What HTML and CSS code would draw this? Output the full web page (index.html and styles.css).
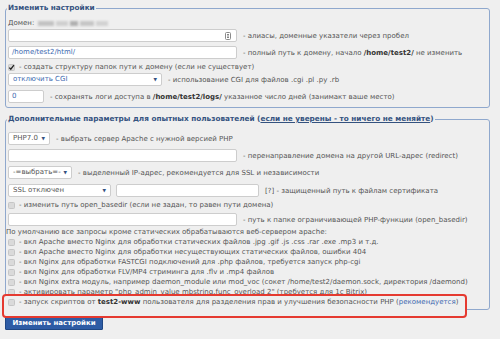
FILE: index.html
```html
<!DOCTYPE html>
<html lang="ru">
<head>
<meta charset="utf-8">
<title>Изменить настройки</title>
<link rel="stylesheet" href="styles.css">
</head>
<body>
<div class="page">
  <fieldset class="box box-main">
    <legend class="legend">Изменить настройки</legend>
    <div class="domain">Домен: <span class="blur"><i></i><i></i><i></i><i></i><i></i></span></div>

    <div class="row mt1">
      <div class="input w-wide"><svg class="autofill" width="6" height="8" viewBox="0 0 6 8"><rect x="0.5" y="0.5" width="5" height="7" rx="1" fill="#fff" stroke="#8a8a8a"/><path d="M2 2.5h2M2 4h2M2 5.5h2" stroke="#666" stroke-width="0.8"/></svg></div>
      <span class="label">- алиасы, доменные указатели через пробел</span>
    </div>

    <div class="row mt4">
      <div class="input w-wide blue">/home/test2/html/</div>
      <span class="label">- полный путь к домену, начало <b>/home/test2/</b> не изменить</span>
    </div>

    <div class="crow crow-first">
      <span class="cb cb-checked"><svg width="7" height="7" viewBox="0 0 7 7"><path d="M1.3 3.6 L2.8 5.2 L5.9 1.2" fill="none" stroke="#222" stroke-width="1.3"/></svg></span>
      <span class="label">- создать структуру папок пути к домену (если не существует)</span>
    </div>

    <div class="row mt1">
      <div class="select w-cgi blue">отключить CGI<span class="arrow">▼</span></div>
      <span class="label">- использование CGI для файлов .cgi .pl .py .rb</span>
    </div>

    <div class="row mt4">
      <div class="input w-days blue">0</div>
      <span class="label">- сохранять логи доступа в <b>/home/test2/logs/</b> указанное число дней (занимакт ваше место)</span>
    </div>
  </fieldset>

  <fieldset class="box box-extra">
    <legend class="legend">Дополнительные параметры для опытных пользователей (<u>если не уверены - то ничего не меняйте</u>)</legend>

    <div class="row mt8">
      <div class="select w-php">PHP7.0<span class="arrow">▼</span></div>
      <span class="label">- выбрать сервер Apache с нужной версией PHP</span>
    </div>

    <div class="row mt4">
      <div class="input w-wide"></div>
      <span class="label">- перенаправление домена на другой URL-адрес (redirect)</span>
    </div>

    <div class="row mt4">
      <div class="select w-ip">-=выбрать=-<span class="arrow">▼</span></div>
      <span class="label">- выделенный IP-адрес, рекомендуется для SSL и независимости</span>
    </div>

    <div class="row mt5">
      <div class="select w-ssl">SSL отключен<span class="arrow">▼</span></div>
      <div class="input w-cert"></div>
      <span class="label">[?] - защищенный путь к файлам сертификата</span>
    </div>

    <div class="crow mt3">
      <span class="cb"></span>
      <span class="label">- изменить путь open_basedir (если не задан, то равен пути домена)</span>
    </div>

    <div class="row mt3">
      <div class="input w-wide"></div>
      <span class="label">- путь к папке ограничивающей PHP-функции (open_basedir)</span>
    </div>

    <div class="note">По умолчанию все запросы кроме статических обрабатываются веб-сервером apache:</div>

    <div class="crow"><span class="cb"></span><span class="label">- вкл Apache вместо Nginx для обработки статических файлов .jpg .gif .js .css .rar .exe .mp3 и т.д.</span></div>
    <div class="crow"><span class="cb"></span><span class="label">- вкл Apache вместо Nginx для обработки несуществующих статических файлов, ошибки 404</span></div>
    <div class="crow"><span class="cb"></span><span class="label">- вкл Nginx для обработки FASTCGI подключений для .php файлов, требуется запуск php-cgi</span></div>
    <div class="crow"><span class="cb"></span><span class="label">- вкл Nginx для обработки FLV/MP4 стриминга для .flv и .mp4 файлов</span></div>
    <div class="crow"><span class="cb"></span><span class="label">- вкл Nginx extra модуль, например daemon_module или mod_voc (сокет /home/test2/daemon.sock, директория /daemond)</span></div>
    <div class="crow"><span class="cb"></span><span class="label">- активировать параметр "php_admin_value mbstring.func_overload 2" (требуется для 1с Bitrix)</span></div>
    <div class="crow highlight"><span class="cb"></span><span class="label">- запуск скриптов от <b>test2-www</b> пользователя для разделения прав и улучшения безопасности PHP (<span class="link">рекомендуется</span>)</span></div>
  </fieldset>

  <div class="actions"><button class="btn" type="button">Изменить настройки</button></div>
</div>
</body>
</html>
```

FILE: styles.css
```css
* { box-sizing: border-box; }

html, body {
  margin: 0;
  padding: 0;
  background: #efefef;
}

body {
  width: 500px;
  height: 339px;
  overflow: hidden;
  font-family: "DejaVu Sans", Verdana, sans-serif;
  font-size: 7px;
  color: #555;
}

.page {
  padding: 3px 10px 0 5px;
}

.box {
  margin: 0;
  min-width: 0;
  border: 1px solid #8fa8cd;
  border-radius: 3px;
  padding: 0 2px 4px 2px;
}

.box-extra {
  margin-top: 6px;
  padding-bottom: 2px;
}

.legend {
  padding: 0 1px;
  margin-left: -1px;
  font-size: 7.3px;
  line-height: 10px;
  font-weight: bold;
  color: #34527f;
}

.legend u {
  text-decoration: underline;
}

.domain {
  margin-top: 5px;
  height: 10px;
  line-height: 10px;
  display: flex;
  align-items: center;
  gap: 3px;
}

.blur {
  display: inline-flex;
  gap: 2px;
  filter: blur(1.2px);
  margin-left: 1px;
}

.blur i {
  display: block;
  height: 5px;
  background: #b8b8b8;
}
.blur i:nth-child(1) { width: 16px; background: #c2c2c2; }
.blur i:nth-child(2) { width: 12px; background: #cfcfcf; }
.blur i:nth-child(3) { width: 8px;  background: #b0b0b0; }
.blur i:nth-child(4) { width: 14px; background: #c6c6c6; }
.blur i:nth-child(5) { width: 12px; background: #d2d2d2; }

.row {
  display: flex;
  align-items: center;
  height: 13px;
  white-space: nowrap;
}

.mt1 { margin-top: 1px; }
.mt3 { margin-top: 3px; }
.mt4 { margin-top: 4px; }
.mt5 { margin-top: 5px; }
.mt8 { margin-top: 8px; }

.input, .select {
  position: relative;
  height: 13px;
  flex: none;
  background: #fff;
  border: 1px solid #cdcdcd;
  border-radius: 2px;
  line-height: 11px;
  padding-left: 3px;
  white-space: nowrap;
  overflow: hidden;
}

.select {
  padding-left: 4px;
}

.blue { color: #3d69b0; }

.w-wide { width: 229px; }
.w-days { width: 36px; }
.w-cgi  { width: 154px; }
.w-php  { width: 42px; }
.w-ip   { width: 64px; }
.w-ssl  { width: 103px; }
.w-cert { width: 143px; margin-left: 5px; }

.arrow {
  position: absolute;
  right: 4px;
  top: 0;
  font-size: 4.5px;
  line-height: 11px;
  color: #34527f;
}

.autofill {
  position: absolute;
  right: 5px;
  top: 2px;
}

.label {
  margin-left: 6px;
  white-space: nowrap;
}

.label b {
  color: #333;
}

.link {
  color: #3d69b0;
}

.crow {
  display: flex;
  align-items: center;
  height: 10px;
  white-space: nowrap;
}

.crow-first {
  margin-top: 3px;
  margin-bottom: 1px;
}

.crow .label {
  margin-left: 4px;
}

.cb {
  flex: none;
  width: 7px;
  height: 7px;
  background: #dadada;
  border: 1px solid #c6c6c6;
  border-radius: 1.5px;
  display: flex;
  align-items: center;
  justify-content: center;
}

.cb-checked {
  background: #d9d9d9;
}

.cb-checked svg {
  display: block;
  margin: -1px;
}

.note {
  margin-top: 2px;
  margin-left: -2px;
  height: 9px;
  line-height: 9px;
  white-space: nowrap;
}

.highlight {
  position: relative;
  z-index: 0;
}

.highlight::before {
  content: "";
  position: absolute;
  z-index: -1;
  left: -6px;
  top: -3px;
  width: 461px;
  height: 20px;
  border: 2px solid #e53a30;
  border-radius: 4px;
  background: #efefef;
}

.actions {
  margin-top: 7px;
  display: flex;
}

.btn {
  height: 13px;
  width: 98px;
  padding: 0;
  border: 1px solid #1f4784;
  background: #2e5ca5;
  color: #fff;
  font-family: "DejaVu Sans", Verdana, sans-serif;
  font-size: 7px;
  font-weight: bold;
  line-height: 11px;
  border-radius: 1px;
}
```
